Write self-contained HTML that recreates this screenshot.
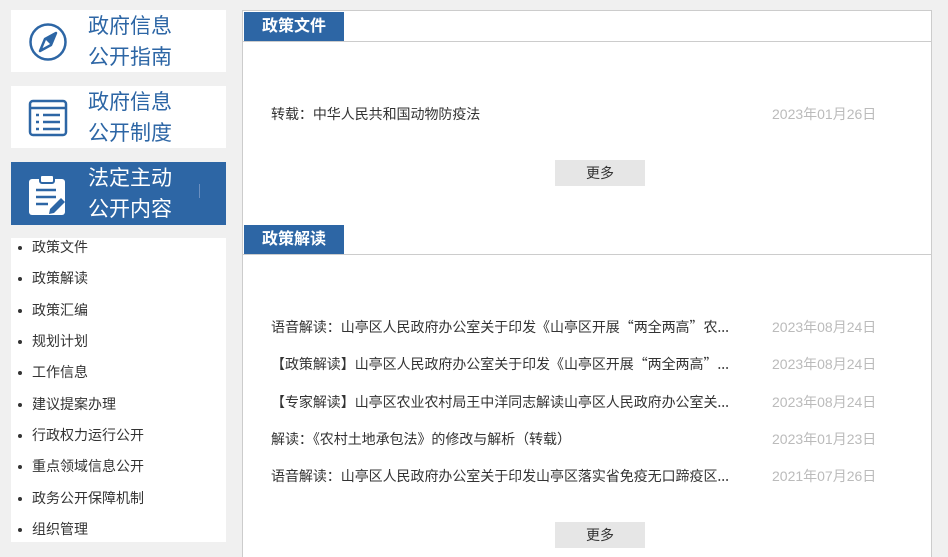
<!DOCTYPE html>
<html><head><meta charset="utf-8"><style>
*{margin:0;padding:0;box-sizing:border-box}
html,body{width:948px;height:557px;overflow:hidden}
body{background:#f0f0f0;font-family:"Liberation Sans","Noto Sans CJK SC",sans-serif;position:relative;color:#333}
.b{position:absolute;left:11px;width:215px;height:62px;background:#fff}
.b .t{position:absolute;left:77px;top:1px;font-size:21px;line-height:31px;color:#2d66a5}
.b svg{position:absolute;left:17px;top:12px}
.blue{background:#2d66a5}
.blue .t{color:#fff}
.list{position:absolute;left:11px;top:238px;width:215px;height:304px;background:#fff}
.list div{position:absolute;left:21px;font-size:14px;line-height:18px;color:#333}
.list div:before{content:"";position:absolute;left:-14px;top:8px;width:4px;height:4px;border-radius:2px;background:#333}
.panel{position:absolute;left:242px;top:10px;width:690px;height:560px;background:#fff;border:1px solid #ccc}
.h{position:absolute;left:1px;width:100px;height:29px;background:#2d66a5;color:#fff;font-weight:bold;font-size:16px;line-height:29px;text-align:center}
.ln{position:absolute;left:0;right:0;height:1px;background:#ccc}
.r{position:absolute;left:28px;font-size:14px;line-height:18px;color:#333;white-space:nowrap;font-family:"Noto Sans CJK SC",sans-serif;letter-spacing:-0.05px}
.d{position:absolute;left:529px;font-size:14px;line-height:18px;color:#bbb}
.m{position:absolute;left:312px;width:90px;height:26px;background:#e6e6e6;font-size:14px;line-height:26px;text-align:center;color:#333}
</style></head><body>
<div class="b" style="top:10px"><svg width="40" height="40" viewBox="0 0 40 40"><circle cx="20" cy="20" r="17.5" fill="none" stroke="#2d66a5" stroke-width="2.5"/><path d="M28 11 L23 23 L12 29 L17 17 Z" fill="none" stroke="#2d66a5" stroke-width="2.5" stroke-linejoin="round"/><path d="M28 11 L23 23 L17 17Z" fill="#2d66a5"/></svg><div class="t">政府信息<br>公开指南</div></div>
<div class="b" style="top:86px"><svg width="40" height="40" viewBox="0 0 40 40"><rect x="2" y="3" width="36" height="34" rx="3" fill="none" stroke="#2d66a5" stroke-width="2.5"/><path d="M2 10H38M8 17h3M15 17h17M8 24h3M15 24h17M8 31h3M15 31h17" stroke="#2d66a5" stroke-width="2.5"/></svg><div class="t">政府信息<br>公开制度</div></div>
<div class="b blue" style="top:162px;height:63px"><svg width="40" height="42" viewBox="0 0 40 42"><rect x="1" y="5" width="36" height="36" rx="3" fill="#fff"/><rect x="12" y="1" width="14" height="8" rx="2" fill="#fff" stroke="#2d66a5" stroke-width="2"/><path d="M8 16h20M8 23h20M8 30h12" stroke="#2d66a5" stroke-width="2.5"/><path d="M33 24 L37 28 L26 39 L21 40 L22 35Z" fill="#2d66a5"/></svg><div class="t">法定主动<br>公开内容</div><div style="position:absolute;left:188px;top:22px;width:1px;height:14px;background:#6a8fc0"></div></div>
<div class="list">
<div style="top:0">政策文件</div><div style="top:31px">政策解读</div><div style="top:63px">政策汇编</div><div style="top:94px">规划计划</div><div style="top:125px">工作信息</div><div style="top:157px">建议提案办理</div><div style="top:188px">行政权力运行公开</div><div style="top:219px">重点领域信息公开</div><div style="top:251px">政务公开保障机制</div><div style="top:282px">组织管理</div>
</div>
<div class="panel">
<div class="h" style="top:1px">政策文件</div><div class="ln" style="top:30px"></div>
<div class="r" style="top:94px">转载：中华人民共和国动物防疫法</div><div class="d" style="top:94px">2023年01月26日</div>
<div class="m" style="top:149px">更多</div>
<div class="h" style="top:214px">政策解读</div><div class="ln" style="top:243px"></div>
<div class="r" style="top:307px">语音解读：山亭区人民政府办公室关于印发《山亭区开展“两全两高”农...</div><div class="d" style="top:307px">2023年08月24日</div>
<div class="r" style="top:344px">【政策解读】山亭区人民政府办公室关于印发《山亭区开展“两全两高”...</div><div class="d" style="top:344px">2023年08月24日</div>
<div class="r" style="top:382px">【专家解读】山亭区农业农村局王中洋同志解读山亭区人民政府办公室关...</div><div class="d" style="top:382px">2023年08月24日</div>
<div class="r" style="top:419px">解读：《农村土地承包法》的修改与解析（转载）</div><div class="d" style="top:419px">2023年01月23日</div>
<div class="r" style="top:456px">语音解读：山亭区人民政府办公室关于印发山亭区落实省免疫无口蹄疫区...</div><div class="d" style="top:456px">2021年07月26日</div>
<div class="m" style="top:511px">更多</div>
</div>
</body></html>
